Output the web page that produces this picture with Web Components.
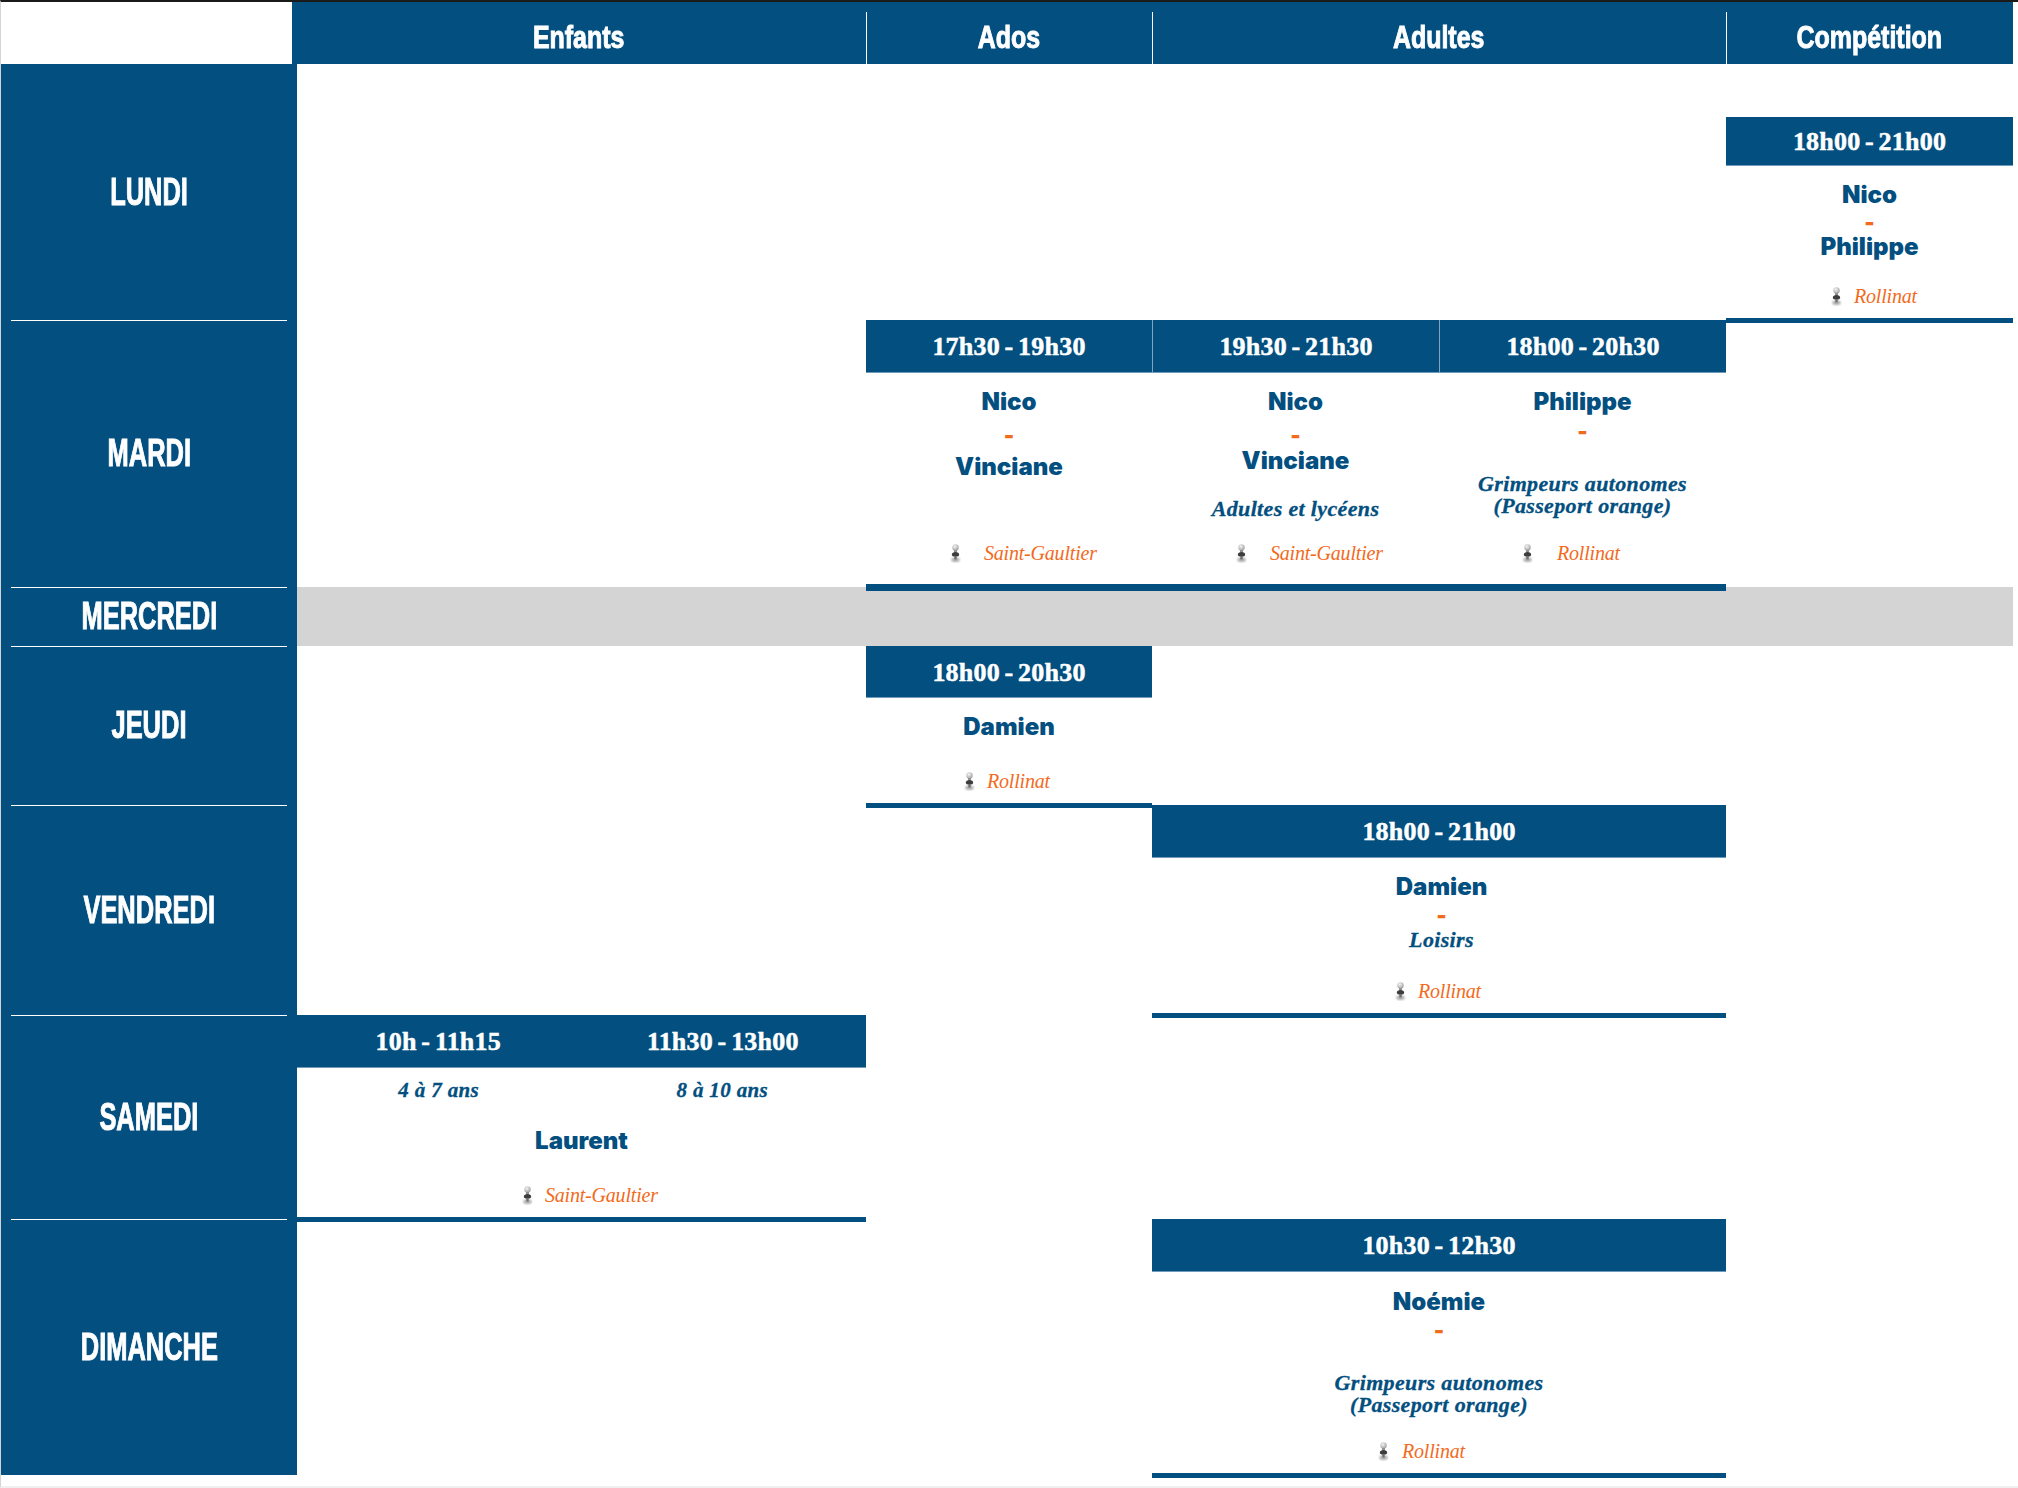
<!DOCTYPE html>
<html lang="fr">
<head>
<meta charset="utf-8">
<title>Planning</title>
<style>
    html, body { margin: 0; background: #fff; }
    body {
        box-sizing: border-box;
        width: 2018px;
        height: 1488px;
        overflow: hidden;
        border-top: 2px solid #1a1a1a;
        border-left: 1px solid #d4d4d4;
        border-bottom: 2px solid #f0f0f0;
    }
</style>
</head>
<body>
<planning-table>
    <col-head slot="head" style="width:574px">Enfants</col-head>
    <col-head slot="head" style="width:286px">Ados</col-head>
    <col-head slot="head" style="width:574px">Adultes</col-head>
    <col-head slot="head" style="width:287px">Compétition</col-head>

    <day-cell style="grid-row:1">LUNDI</day-cell>
    <day-cell style="grid-row:2">MARDI</day-cell>
    <day-cell style="grid-row:3">MERCREDI</day-cell>
    <day-cell style="grid-row:4">JEUDI</day-cell>
    <day-cell style="grid-row:5">VENDREDI</day-cell>
    <day-cell style="grid-row:6">SAMEDI</day-cell>
    <day-cell style="grid-row:7" last>DIMANCHE</day-cell>

    <closed-band style="grid-row:3"></closed-band>

    <slot-card style="grid-column:6;grid-row:1;margin-top:53px;">
        <time-bar slot="times" style="height:49px">18h00 - 21h00</time-bar>
        <coach-name>Nico</coach-name>
        <coach-sep style="margin-top:4px">-</coach-sep>
        <coach-name style="margin-top:2px">Philippe</coach-name>
        <gym-place style="margin-top:auto;padding-left:105px;gap:12px">Rollinat</gym-place>
    </slot-card>

    <slot-card style="grid-column:3;grid-row:2" tall>
        <time-bar slot="times" style="height:53px">17h30 - 19h30</time-bar>
        <coach-name>Nico</coach-name>
        <coach-sep style="margin-top:10px">-</coach-sep>
        <coach-name style="margin-top:9px">Vinciane</coach-name>
        <gym-place style="margin-top:auto;padding-left:84px;gap:23px">Saint-Gaultier</gym-place>
    </slot-card>
    <slot-card style="grid-column:4;grid-row:2" tall>
        <time-bar slot="times" style="height:53px" divided>19h30 - 21h30</time-bar>
        <coach-name>Nico</coach-name>
        <coach-sep style="margin-top:10px">-</coach-sep>
        <coach-name style="margin-top:3px">Vinciane</coach-name>
        <group-note style="margin-top:24px">Adultes et lycéens</group-note>
        <gym-place style="margin-top:auto;padding-left:84px;gap:23px">Saint-Gaultier</gym-place>
    </slot-card>
    <slot-card style="grid-column:5;grid-row:2" tall>
        <time-bar slot="times" style="height:53px" divided>18h00 - 20h30</time-bar>
        <coach-name>Philippe</coach-name>
        <coach-sep style="margin-top:6px">-</coach-sep>
        <group-note style="margin-top:32px">Grimpeurs autonomes<br>(Passeport orange)</group-note>
        <gym-place style="margin-top:auto;padding-left:83px;gap:24px">Rollinat</gym-place>
    </slot-card>

    <slot-card style="grid-column:3;grid-row:4">
        <time-bar slot="times" style="height:52px">18h00 - 20h30</time-bar>
        <coach-name>Damien</coach-name>
        <gym-place style="margin-top:auto;padding-left:98px;gap:12px">Rollinat</gym-place>
    </slot-card>

    <slot-card style="grid-column:4 / span 2;grid-row:5">
        <time-bar slot="times" style="height:53px">18h00 - 21h00</time-bar>
        <coach-name style="padding-left:5px">Damien</coach-name>
        <coach-sep style="margin-top:5px;padding-left:5px">-</coach-sep>
        <group-note style="margin-top:4px;padding-left:5px">Loisirs</group-note>
        <gym-place style="margin-top:auto;padding-left:243px;gap:12px">Rollinat</gym-place>
    </slot-card>

    <slot-card style="grid-column:2;grid-row:6">
        <time-bar slot="times" style="height:53px;padding-right:2px">10h - 11h15</time-bar>
        <time-bar slot="times" style="height:53px;padding-right:2px">11h30 - 13h00</time-bar>
        <age-note slot="ages">4 à 7 ans</age-note>
        <age-note slot="ages">8 à 10 ans</age-note>
        <coach-name style="margin-top:11px">Laurent</coach-name>
        <gym-place style="margin-top:auto;padding-left:225px;gap:12px">Saint-Gaultier</gym-place>
    </slot-card>

    <slot-card style="grid-column:4 / span 2;grid-row:7">
        <time-bar slot="times" style="height:53px">10h30 - 12h30</time-bar>
        <coach-name style="margin-top:1px">Noémie</coach-name>
        <coach-sep style="margin-top:5px">-</coach-sep>
        <group-note style="margin-top:32px">Grimpeurs autonomes<br>(Passeport orange)</group-note>
        <gym-place style="margin-top:auto;padding-left:226px;gap:13px">Rollinat</gym-place>
    </slot-card>
</planning-table>

<script>
const BLUE = '#034f80';
const ORANGE = '#f26a1c';

class PlanningTable extends HTMLElement {
    constructor() {
        super();
        this.attachShadow({ mode: 'open' });
        this.shadowRoot.innerHTML = `
            <style>
                :host { display: block; }
                .head { display: flex; height: 62px; padding-left: 291px; }
                .grid {
                    display: grid;
                    grid-template-columns: 296px 569px 286px 287px 287px 287px;
                    grid-template-rows: 256px 267px 59px 159px 210px 204px 256px;
                }
            </style>
            <div class="head"><slot name="head"></slot></div>
            <div class="grid"><slot></slot></div>
        `;
    }
}

class ColHead extends HTMLElement {
    constructor() {
        super();
        this.attachShadow({ mode: 'open' });
        this.shadowRoot.innerHTML = `
            <style>
                :host {
                    display: block;
                    box-sizing: border-box;
                    height: 62px;
                    padding-top: 4px;
                    background: ${BLUE};
                    position: relative;
                    color: #fff;
                    text-align: center;
                    font: bold 32px/62px "Liberation Sans", sans-serif;
                    -webkit-text-stroke: 1px #fff;
                }
                :host(:not(:first-child))::before {
                    content: "";
                    position: absolute;
                    left: 0;
                    top: 10px;
                    bottom: 0;
                    width: 1px;
                    background: #fff;
                }
                .t { display: inline-block; transform: scaleX(.78); }
            </style>
            <span class="t"><slot></slot></span>
        `;
    }
}

class DayCell extends HTMLElement {
    constructor() {
        super();
        this.attachShadow({ mode: 'open' });
        this.shadowRoot.innerHTML = `
            <style>
                :host {
                    display: flex;
                    grid-column: 1;
                    align-items: center;
                    justify-content: center;
                    position: relative;
                    background: ${BLUE};
                    color: #fff;
                    font: bold 38px "Liberation Sans", sans-serif;
                    -webkit-text-stroke: 1px #fff;
                }
                .t { display: inline-block; transform: scaleX(.67); }
                .rule {
                    position: absolute;
                    left: 10px;
                    right: 10px;
                    bottom: -1px;
                    height: 1px;
                    background: #fff;
                    z-index: 1;
                }
                :host([last]) .rule { display: none; }
            </style>
            <span class="t"><slot></slot></span>
            <div class="rule"></div>
        `;
    }
}

class ClosedBand extends HTMLElement {
    constructor() {
        super();
        this.attachShadow({ mode: 'open' });
        this.shadowRoot.innerHTML = `
            <style>
                :host { display: block; grid-column: 2 / -1; background: #d4d4d4; }
            </style>
        `;
    }
}

class SlotCard extends HTMLElement {
    constructor() {
        super();
        this.attachShadow({ mode: 'open' });
        this.shadowRoot.innerHTML = `
            <style>
                :host {
                    display: flex;
                    flex-direction: column;
                    z-index: 1;
                    margin-bottom: -3px;
                    border-bottom: 5px solid ${BLUE};
                    box-sizing: border-box;
                    background: #fff;
                }
                :host([tall]) { margin-bottom: -4px; border-bottom-width: 7px; }
                .times { display: flex; }
                .times ::slotted(*) { flex: 1 1 0; }
                .ages { display: flex; padding-right: 2px; }
                .ages ::slotted(*) { flex: 1 1 0; }
                .body {
                    flex: 1;
                    display: flex;
                    flex-direction: column;
                    padding: 16px 0 11px;
                }
                :host([tall]) .body { padding-bottom: 20px; }
            </style>
            <div class="times"><slot name="times"></slot></div>
            <div class="ages"><slot name="ages"></slot></div>
            <div class="body"><slot></slot></div>
        `;
    }
}

class TimeBar extends HTMLElement {
    constructor() {
        super();
        this.attachShadow({ mode: 'open' });
        this.shadowRoot.innerHTML = `
            <style>
                :host {
                    display: flex;
                    align-items: center;
                    justify-content: center;
                    box-sizing: border-box;
                    padding-top: 2px;
                    background: ${BLUE};
                    color: #fff;
                    font: bold 26px "Liberation Serif", serif;
                    letter-spacing: .2px;
                    word-spacing: -2px;
                    -webkit-text-stroke: 0.5px #fff;
                    border-bottom: 1px solid #6f9ab8;
                }
                :host([divided]) { border-left: 1px solid #7ea4bf; }
            </style>
            <slot></slot>
        `;
    }
}

class CoachName extends HTMLElement {
    constructor() {
        super();
        this.attachShadow({ mode: 'open' });
        this.shadowRoot.innerHTML = `
            <style>
                :host {
                    display: block;
                    text-align: center;
                    color: ${BLUE};
                    font: 900 24px/26px Inter, "Liberation Sans", sans-serif;
                }
            </style>
            <slot></slot>
        `;
    }
}

class CoachSep extends HTMLElement {
    constructor() {
        super();
        this.attachShadow({ mode: 'open' });
        this.shadowRoot.innerHTML = `
            <style>
                :host {
                    display: block;
                    text-align: center;
                    color: ${ORANGE};
                    font: 900 22px/20px Inter, "Liberation Sans", sans-serif;
                }
            </style>
            <slot></slot>
        `;
    }
}

class GroupNote extends HTMLElement {
    constructor() {
        super();
        this.attachShadow({ mode: 'open' });
        this.shadowRoot.innerHTML = `
            <style>
                :host {
                    display: block;
                    text-align: center;
                    color: ${BLUE};
                    font: italic bold 22px/22px "Liberation Serif", serif;
                    letter-spacing: .35px;
                    -webkit-text-stroke: 0.3px ${BLUE};
                }
            </style>
            <slot></slot>
        `;
    }
}

class AgeNote extends HTMLElement {
    constructor() {
        super();
        this.attachShadow({ mode: 'open' });
        this.shadowRoot.innerHTML = `
            <style>
                :host {
                    display: block;
                    padding-top: 11px;
                    text-align: center;
                    color: ${BLUE};
                    font: italic bold 21px/22px "Liberation Serif", serif;
                    letter-spacing: .35px;
                    -webkit-text-stroke: 0.3px ${BLUE};
                }
            </style>
            <slot></slot>
        `;
    }
}

class GymPlace extends HTMLElement {
    constructor() {
        super();
        this.attachShadow({ mode: 'open' });
        this.shadowRoot.innerHTML = `
            <style>
                :host {
                    display: flex;
                    align-items: center;
                    color: ${ORANGE};
                    font: italic 20px/22px "Liberation Serif", serif;
                    letter-spacing: -.2px;
                }
                svg { flex: none; }
            </style>
            <svg width="11" height="19" viewBox="0 0 11 19">
                <defs>
                    <filter id="b" x="-60%" y="-60%" width="220%" height="220%"><feGaussianBlur stdDeviation="1"/></filter>
                    <filter id="s" x="-20%" y="-20%" width="140%" height="140%"><feGaussianBlur stdDeviation="0.35"/></filter>
                    <radialGradient id="h" cx=".4" cy=".35" r=".7">
                        <stop offset="0" stop-color="#f4f4f4"/>
                        <stop offset="1" stop-color="#9c9c9c"/>
                    </radialGradient>
                </defs>
                <ellipse cx="5.5" cy="15.8" rx="4.2" ry="2.2" fill="#a8a8a8" filter="url(#b)"/>
                <g filter="url(#s)">
                    <circle cx="5.5" cy="3.4" r="3.2" fill="url(#h)"/>
                    <path d="M4 6h3v2.6H4z" fill="#909090"/>
                    <path d="M1.8 10.8c0-1.8 1.6-2.8 3.7-2.8s3.7 1 3.7 2.8c0 1.1-1.6 2-3.7 2s-3.7-.9-3.7-2z" fill="#3c3c3c"/>
                    <path d="M4.3 12h2.4v3.4H4.3z" fill="#6e6e6e"/>
                </g>
            </svg>
            <slot></slot>
        `;
    }
}

customElements.define('planning-table', PlanningTable);
customElements.define('col-head', ColHead);
customElements.define('day-cell', DayCell);
customElements.define('closed-band', ClosedBand);
customElements.define('slot-card', SlotCard);
customElements.define('time-bar', TimeBar);
customElements.define('coach-name', CoachName);
customElements.define('coach-sep', CoachSep);
customElements.define('group-note', GroupNote);
customElements.define('age-note', AgeNote);
customElements.define('gym-place', GymPlace);
</script>
</body>
</html>
